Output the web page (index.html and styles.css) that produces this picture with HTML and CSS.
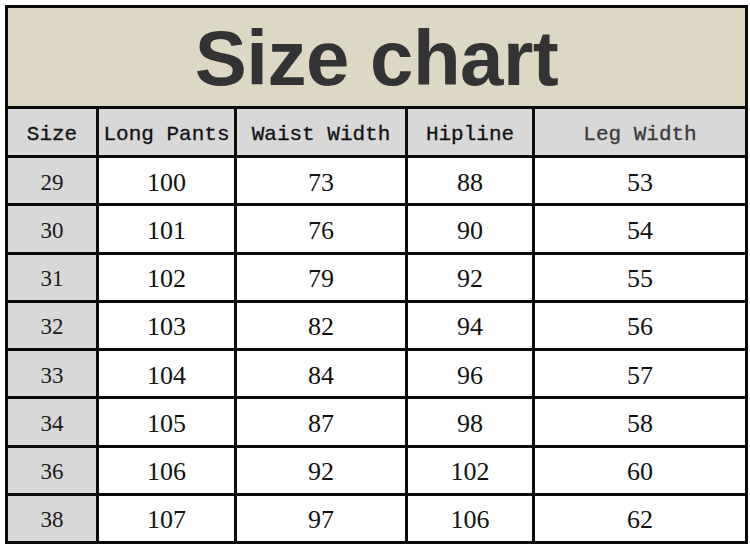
FILE: index.html
```html
<!DOCTYPE html>
<html>
<head>
<meta charset="utf-8">
<link rel="stylesheet" href="styles.css">
</head>
<body>
<div class="chart">
  <div class="title">Size chart</div>
  <div class="hd">Size</div>
  <div class="hd">Long Pants</div>
  <div class="hd">Waist Width</div>
  <div class="hd">Hipline</div>
  <div class="hd light">Leg Width</div>

  <div class="sz">29</div><div class="v">100</div><div class="v">73</div><div class="v">88</div><div class="v">53</div>
  <div class="sz">30</div><div class="v">101</div><div class="v">76</div><div class="v">90</div><div class="v">54</div>
  <div class="sz">31</div><div class="v">102</div><div class="v">79</div><div class="v">92</div><div class="v">55</div>
  <div class="sz">32</div><div class="v">103</div><div class="v">82</div><div class="v">94</div><div class="v">56</div>
  <div class="sz">33</div><div class="v">104</div><div class="v">84</div><div class="v">96</div><div class="v">57</div>
  <div class="sz">34</div><div class="v">105</div><div class="v">87</div><div class="v">98</div><div class="v">58</div>
  <div class="sz">36</div><div class="v">106</div><div class="v">92</div><div class="v">102</div><div class="v">60</div>
  <div class="sz">38</div><div class="v">107</div><div class="v">97</div><div class="v">106</div><div class="v">62</div>
</div>
</body>
</html>
```
FILE: styles.css
```css
html, body {
  margin: 0;
  padding: 0;
  background: #ffffff;
}
body {
  padding: 5px 0 0 5px;
  width: 750px;
  height: 551px;
  box-sizing: border-box;
}
.chart {
  width: 743px;
  box-sizing: border-box;
  background: #0a0a0a;
  padding: 3px;
  display: grid;
  grid-template-columns: 88px 135px 168px 124px 210px;
  grid-template-rows: 98px 46px repeat(8, 45.25px);
  gap: 3px;
}
.chart > div {
  display: flex;
  align-items: center;
  justify-content: center;
}
.title {
  grid-column: 1 / 6;
  background: #dcd8c3;
  color: #333333;
  font-family: "Liberation Sans", Arial, sans-serif;
  font-weight: bold;
  font-size: 78px;
  letter-spacing: -0.5px;
  padding-top: 2px;
}
.hd {
  background: #d8d8d8;
  color: #111111;
  font-family: "Liberation Mono", "Courier New", monospace;
  font-size: 21px;
  padding-top: 4px;
  -webkit-text-stroke: 0.3px #111111;
}
.hd:first-child + .hd {
  padding-right: 0;
}
.hd.light {
  color: #3a3a3a;
  -webkit-text-stroke: 0.3px #3a3a3a;
}
.sz {
  background: #d8d8d8;
  color: #1a1a1a;
  font-family: "Liberation Serif", "Times New Roman", serif;
  font-size: 23px;
  padding-top: 4px;
}
.v {
  background: #ffffff;
  color: #111111;
  font-family: "Liberation Serif", "Times New Roman", serif;
  font-size: 26px;
  padding-top: 4px;
}
```
